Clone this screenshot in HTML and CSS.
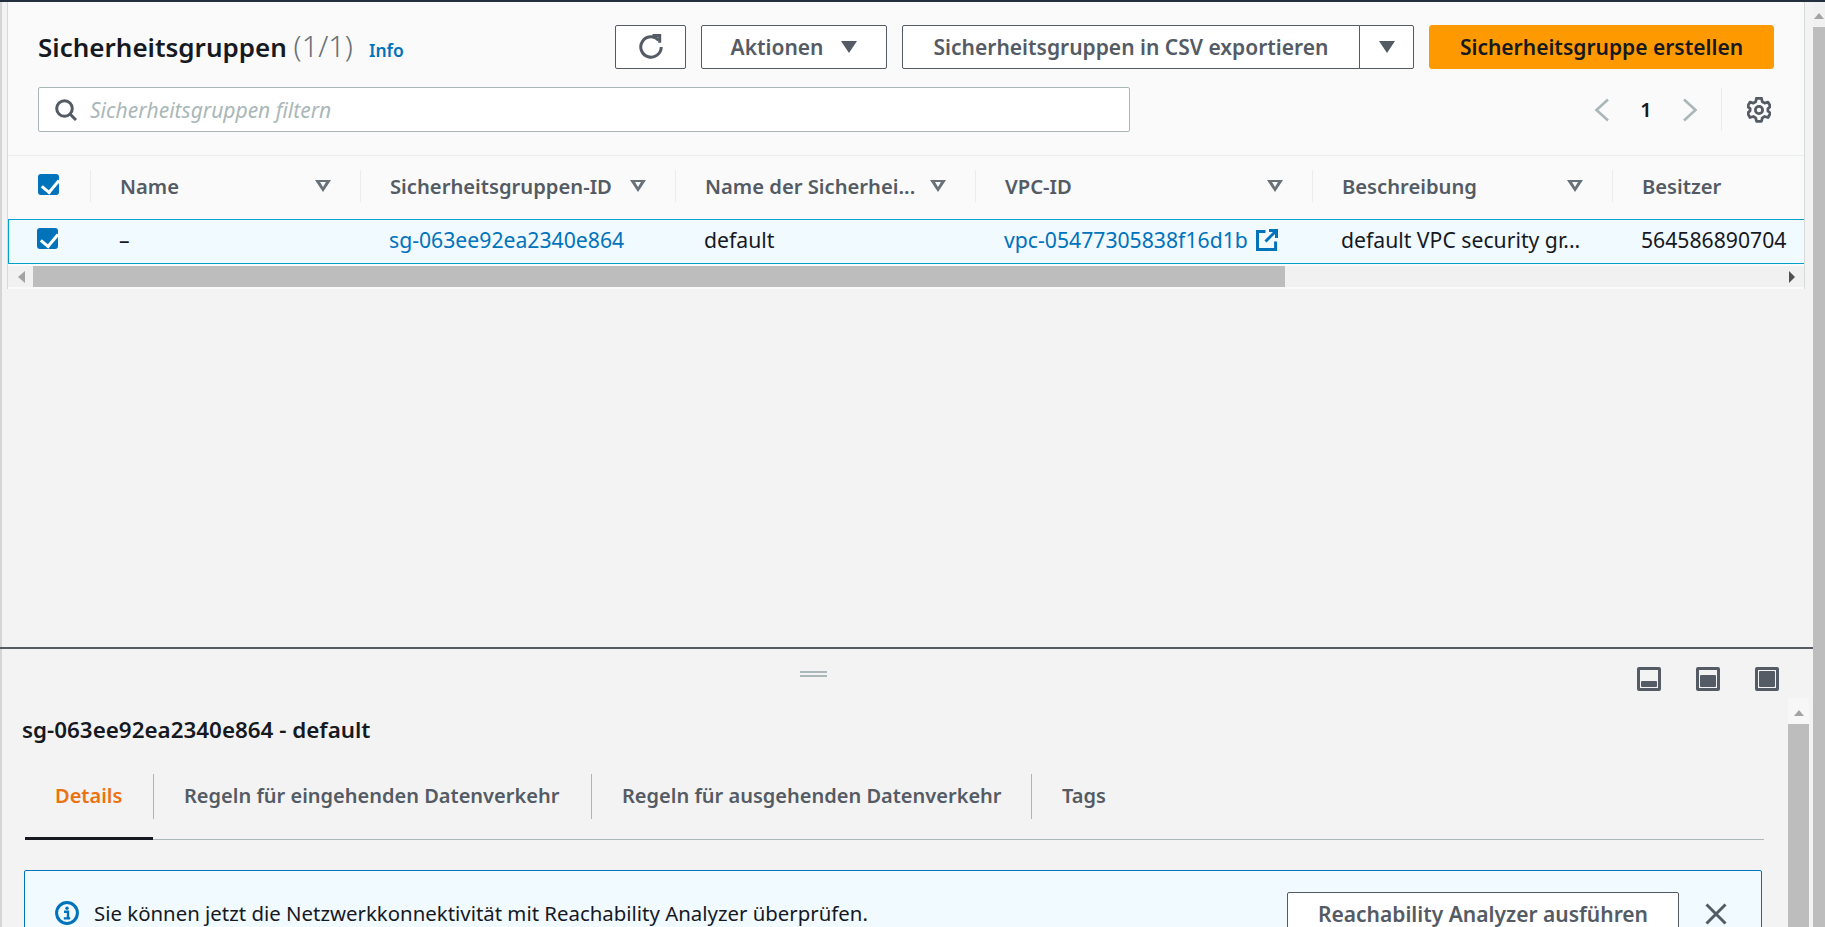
FILE: index.html

```html
<!DOCTYPE html>
<html lang="de">
<head>
  <meta charset="UTF-8" />
  <meta name="viewport" content="width=device-width, initial-scale=1.0"/>
  <title>Sicherheitsgruppen</title>
  <link rel="stylesheet" href="styles.css">
</head>
<body>
  <div class="topline"></div>
  <div class="frame">
    <main class="main">
      <section class="groups">
        <div class="head">
          <h1 class="title">Sicherheitsgruppen <span class="count">(1/1)</span></h1>
          <a class="info" href="#">Info</a>
          <div class="actions">
            <button class="btn btn-refresh" aria-label="Aktualisieren">
              <svg width="26" height="26" viewBox="0 0 26 26" fill="none" stroke="#545b64" stroke-width="3">
                <path d="M20.600 6.200A10.200 10.200 0 1 0 23.200 13"/>
                <path d="M14.500 1.600h7.200v7.200"/>
              </svg>
            </button>
            <button class="btn btn-actions">Aktionen <span class="caret"></span></button>
            <div class="split">
              <button class="btn split-main">Sicherheitsgruppen in CSV exportieren</button>
              <button class="btn split-caret" aria-label="Mehr"><span class="caret"></span></button>
            </div>
            <button class="btn btn-primary">Sicherheitsgruppe erstellen</button>
          </div>
        </div>

        <div class="tools">
          <div class="filter">
            <svg width="22" height="22" viewBox="0 0 22 22" fill="none" stroke="#545b64" stroke-width="3">
              <circle cx="9.500" cy="9.500" r="7.800"/>
              <path d="M15 15l6 6"/>
            </svg>
            <span class="placeholder">Sicherheitsgruppen filtern</span>
          </div>
          <div class="pager">
            <svg class="chev" width="16" height="24" viewBox="0 0 16 24" fill="none" stroke="#aab7b8" stroke-width="2.600"><path d="M14 1.500L2.500 12 14 22.500"/></svg>
            <span class="page-no">1</span>
            <svg class="chev" width="16" height="24" viewBox="0 0 16 24" fill="none" stroke="#aab7b8" stroke-width="2.600"><path d="M2 1.500L13.500 12 2 22.500"/></svg>
          </div>
          <div class="settings">
            <svg width="24" height="26" viewBox="0 0 24 26" fill="none" stroke="#545b64" stroke-width="2.800" stroke-linejoin="round">
              <path d="M9.500 1.500h5l.8 3.400 2.400 1.400 3.300-1 2.400 4.200-2.500 2.400v2.200l2.500 2.400-2.400 4.200-3.300-1-2.400 1.400-.8 3.400h-5l-.8-3.400-2.400-1.400-3.300 1L.6 16.400l2.500-2.400v-2.200L.6 9.500 3 5.300l3.300 1 2.400-1.400z" transform="translate(0 -.2)"/>
              <circle cx="12" cy="13" r="3.600"/>
            </svg>
          </div>
        </div>

        <div class="table-head cols">
          <div class="cell-check"><span class="check"></span></div>
          <div class="th">Name <span class="sort"></span></div>
          <div class="th">Sicherheitsgruppen-ID <span class="sort"></span></div>
          <div class="th">Name der Sicherhei... <span class="sort"></span></div>
          <div class="th">VPC-ID <span class="sort"></span></div>
          <div class="th">Beschreibung <span class="sort"></span></div>
          <div class="th">Besitzer</div>
        </div>

        <div class="table-row cols">
          <div class="cell-check"><span class="check"></span></div>
          <div class="td">–</div>
          <div class="td"><a href="#">sg-063ee92ea2340e864</a></div>
          <div class="td">default</div>
          <div class="td"><a href="#">vpc-05477305838f16d1b</a>
            <svg class="ext" width="22" height="22" viewBox="0 0 22 22" fill="none" stroke="#0073bb" stroke-width="3">
              <path d="M9.500 2.400H1.500v18.100h18.100v-8"/>
              <path d="M13 1.500h7.500V9M20.200 1.800L9.500 12.500"/>
            </svg>
          </div>
          <div class="td">default VPC security gr...</div>
          <div class="td">564586890704</div>
        </div>

        <div class="hscroll">
          <span class="arrow arrow-left"></span>
          <div class="hthumb"></div>
          <span class="arrow arrow-right"></span>
        </div>
      </section>

      <div class="spacer"></div>

      <section class="drawer">
        <div class="drawer-bar">
          <div class="grip"></div>
          <div class="sizes">
            <span class="size size-small"></span>
            <span class="size size-mid"></span>
            <span class="size size-full"></span>
          </div>
        </div>
        <div class="drawer-body">
          <div class="drawer-content">
            <h2 class="sub">sg-063ee92ea2340e864 - default</h2>
            <nav class="tabs">
              <a class="tab tab-active" href="#">Details</a>
              <a class="tab tab-in" href="#">Regeln für eingehenden Datenverkehr</a>
              <a class="tab tab-out" href="#">Regeln für ausgehenden Datenverkehr</a>
              <a class="tab tab-tags" href="#">Tags</a>
            </nav>
            <div class="alert">
              <svg class="alert-icon" width="24" height="24" viewBox="0 0 24 24" fill="none">
                <circle cx="12" cy="12" r="10.400" stroke="#0073bb" stroke-width="3"/>
                <circle cx="12" cy="7.300" r="1.700" fill="#0073bb"/>
                <path d="M9 10.800h4v6.200M8.800 17.400h6.400" stroke="#0073bb" stroke-width="2.400"/>
              </svg>
              <span class="alert-text">Sie können jetzt die Netzwerkkonnektivität mit Reachability Analyzer überprüfen.</span>
              <button class="btn btn-run">Reachability Analyzer ausführen</button>
              <svg class="alert-close" width="22" height="22" viewBox="0 0 22 22" fill="none" stroke="#545b64" stroke-width="3"><path d="M1.500 1.500l19 19M20.500 1.500l-19 19"/></svg>
            </div>
          </div>
          <div class="vscroll">
            <span class="arrow arrow-up"></span>
            <div class="vthumb"></div>
          </div>
        </div>
      </section>
    </main>
    <div class="page-scroll">
      <span class="arrow arrow-up"></span>
      <div class="vthumb"></div>
    </div>
  </div>
</body>
</html>
```

FILE: styles.css

```css
* {
  box-sizing: border-box;
}

html, body {
  height: 100%;
  margin: 0;
  overflow: hidden;
}

body {
  font-family: "Noto Sans", "Open Sans", sans-serif;
  font-size: 20px;
  color: #16191f;
  background-color: #f3f3f3;
}

a {
  color: #0073bb;
  text-decoration: none;
}

.topline {
  height: 2px;
  background-color: #232f3e;
}

.frame {
  display: flex;
  height: 925px;
}

.main {
  width: 1813px;
  display: flex;
  flex-direction: column;
  border-left: 2px solid #d5d5d5;
}

/* top panel */
.groups {
  margin-left: 5px;
  width: 1798px;
  height: 287px;
  background-color: #fafafa;
  border-left: 1px solid #d5dbdb;
  border-right: 1px solid #d5dbdb;
}

.head {
  display: flex;
  align-items: center;
  height: 44px;
  margin-top: 23px;
  padding-left: 30px;
}

.title {
  margin: 0;
  padding-bottom: 2px;
  font-size: 26px;
  font-weight: 600;
  line-height: 44px;
  white-space: nowrap;
}

.count {
  font-size: 29px;
  font-weight: 300;
  color: #687078;
}

.info {
  margin-left: 16px;
  margin-top: 6px;
  font-size: 17.500px;
  font-weight: 600;
}

.actions {
  display: flex;
  gap: 15px;
  margin-left: auto;
  margin-right: 30px;
}

.btn {
  height: 44px;
  padding: 0;
  font-family: inherit;
  font-size: 21px;
  font-weight: 600;
  color: #545b64;
  background-color: #fff;
  border: 1px solid #545b64;
  border-radius: 2px;
  white-space: nowrap;
  cursor: pointer;
}

.btn-refresh {
  width: 71px;
  display: flex;
  align-items: center;
  justify-content: center;
}

.btn-actions {
  width: 186px;
  display: flex;
  align-items: center;
  justify-content: center;
  gap: 18px;
}

.caret {
  display: inline-block;
  width: 0;
  height: 0;
  border-left: 8px solid transparent;
  border-right: 8px solid transparent;
  border-top: 12px solid #545b64;
}

.split {
  display: flex;
}

.split-main {
  width: 458px;
  border-radius: 2px 0 0 2px;
}

.split-caret {
  width: 55px;
  margin-left: -1px;
  border-radius: 0 2px 2px 0;
  display: flex;
  align-items: center;
  justify-content: center;
}

.btn-primary {
  width: 345px;
  color: #16191f;
  background-color: #f90;
  border-color: #f90;
  border-radius: 3px;
}

.tools {
  display: flex;
  align-items: center;
  height: 45px;
  margin-top: 18px;
  padding-left: 30px;
}

.filter {
  width: 1092px;
  height: 45px;
  display: flex;
  align-items: center;
  gap: 13px;
  padding-left: 16px;
  background-color: #fff;
  border: 1px solid #aab7b8;
  border-radius: 2px;
}

.placeholder {
  font-size: 21px;
  font-style: italic;
  color: #aab7b8;
}

.pager {
  display: flex;
  align-items: center;
  margin-left: 464px;
  width: 127px;
}

.page-no {
  width: 72px;
  text-align: center;
  font-weight: 600;
}

.settings {
  height: 43px;
  padding-left: 25px;
  display: flex;
  align-items: center;
  border-left: 1px solid #eaeded;
}

.cols {
  display: grid;
  grid-template-columns: 82px 270px 315px 300px 337px 300px 1fr;
}

.table-head {
  height: 64px;
  margin-top: 23px;
  padding-bottom: 4px;
  border-top: 1px solid #eaeded;
  align-items: center;
}

.cell-check {
  padding-left: 30px;
  padding-bottom: 3px;
  display: flex;
}

.check {
  position: relative;
  width: 21px;
  height: 21px;
  background-color: #0073bb;
  border-radius: 3px;
}

.check::after {
  content: "";
  position: absolute;
  left: 7px;
  top: 2px;
  width: 8px;
  height: 14px;
  border: solid #fff;
  border-width: 0 3px 3px 0;
  transform: rotate(40deg);
}

.th {
  height: 32px;
  display: flex;
  align-items: center;
  justify-content: space-between;
  padding: 0 29px 0 29px;
  font-size: 20.200px;
  font-weight: 600;
  color: #545b64;
  border-left: 1px solid #eaeded;
  white-space: nowrap;
}

.sort {
  position: relative;
  flex: none;
  width: 0;
  height: 0;
  margin-left: 8px;
  border-left: 8px solid transparent;
  border-right: 8px solid transparent;
  border-top: 12px solid #687078;
}

.sort::after {
  content: "";
  position: absolute;
  left: -3.500px;
  top: -10px;
  width: 0;
  height: 0;
  border-left: 3.500px solid transparent;
  border-right: 3.500px solid transparent;
  border-top: 5.500px solid #fafafa;
}

.table-row {
  height: 45px;
  align-items: center;
  background-color: #f1faff;
  border-top: 1px solid #00a1c9;
  border-bottom: 1px solid #00a1c9;
  border-left: 1px solid #00a1c9;
}

.table-row .cell-check {
  padding-left: 28px;
  padding-bottom: 6px;
}

.td {
  display: flex;
  align-items: center;
  gap: 8px;
  padding-left: 28px;
  padding-bottom: 4px;
  font-size: 21.200px;
  white-space: nowrap;
}

.ext {
  flex: none;
}

/* scrollbars */
.hscroll {
  display: flex;
  align-items: center;
  height: 21px;
  margin-top: 2px;
  background-color: #f1f1f1;
}

.hthumb {
  width: 1252px;
  height: 21px;
  margin-left: 8px;
  background-color: #bdbdbd;
}

.arrow {
  flex: none;
  width: 0;
  height: 0;
  display: block;
}

.arrow-left {
  margin-left: 10px;
  border-top: 6px solid transparent;
  border-bottom: 6px solid transparent;
  border-right: 7px solid #a3a3a3;
}

.arrow-right {
  margin-left: auto;
  margin-right: 9px;
  border-top: 6px solid transparent;
  border-bottom: 6px solid transparent;
  border-left: 6px solid #505050;
}

.arrow-up {
  border-left: 5px solid transparent;
  border-right: 5px solid transparent;
  border-bottom: 6px solid #a3a3a3;
}

.spacer {
  flex: 1;
}

/* bottom drawer */
.drawer {
  height: 280px;
  margin-left: -2px;
  border-top: 2px solid #545b64;
}

.drawer-bar {
  display: flex;
  justify-content: space-between;
  height: 49px;
  padding: 18px 34px 0 800px;
}

.grip {
  width: 27px;
  height: 6px;
  margin-top: 4px;
  border-top: 2px solid #aab7b8;
  border-bottom: 2px solid #aab7b8;
}

.sizes {
  display: flex;
  gap: 35px;
}

.size {
  position: relative;
  width: 24px;
  height: 24px;
  background-color: #545b64;
  border-radius: 2px;
}

.size::before {
  content: "";
  position: absolute;
  inset: 3px;
  background-color: #f3f3f3;
}

.size::after {
  content: "";
  position: absolute;
  left: 4px;
  right: 4px;
  bottom: 4px;
  background-color: #545b64;
  border-radius: 1px;
}

.size-small::after {
  height: 6px;
}

.size-mid::after {
  height: 12px;
}

.size-full::after {
  height: 16px;
}

.drawer-body {
  display: flex;
  height: 229px;
}

.drawer-content {
  width: 1786px;
  margin-right: 2px;
  padding: 18px 0 0 22px;
}

.sub {
  margin: 0;
  height: 27px;
  font-size: 22.400px;
  font-weight: 600;
  line-height: 27px;
}

.tabs {
  display: flex;
  align-items: flex-start;
  width: 1739px;
  height: 80px;
  margin-left: 3px;
  margin-top: 17px;
  padding-top: 14px;
  border-bottom: 1px solid #aab7b8;
}

.tab {
  display: flex;
  align-items: center;
  height: 45px;
  padding: 0 30px 2px;
  font-weight: 600;
  color: #545b64;
  border-right: 1px solid #aab7b8;
  white-space: nowrap;
}

.tab-active {
  position: relative;
  width: 129px;
  color: #ec7211;
}

.tab-active::after {
  content: "";
  position: absolute;
  left: 0;
  right: 0;
  bottom: -21px;
  height: 3px;
  background-color: #16191f;
}

.tab-in {
  width: 438px;
}

.tab-out {
  width: 440px;
}

.tab-tags {
  border-right: 0;
}

.alert {
  display: flex;
  align-items: flex-start;
  width: 1738px;
  height: 100px;
  margin-left: 2px;
  margin-top: 30px;
  padding: 21px 0 0 30px;
  background-color: #f1faff;
  border: 1px solid #0073bb;
  border-radius: 2px;
}

.alert-icon {
  flex: none;
  margin-top: 9px;
}

.alert-text {
  margin-left: 15px;
  margin-top: 7px;
  font-size: 20.400px;
  white-space: nowrap;
}

.btn-run {
  width: 392px;
  margin-left: auto;
}

.alert-close {
  flex: none;
  margin: 11px 34px 0 26px;
}

.vscroll {
  width: 21px;
  display: flex;
  flex-direction: column;
  align-items: center;
  padding-top: 12px;
  background-color: #f7f7f7;
}

.vthumb {
  flex: 1;
  align-self: stretch;
  margin-top: 8px;
  background-color: #bdbdbd;
}

.page-scroll {
  width: 12px;
  display: flex;
  flex-direction: column;
  align-items: center;
  padding-top: 11px;
  background-color: #f1f1f1;
}
```
